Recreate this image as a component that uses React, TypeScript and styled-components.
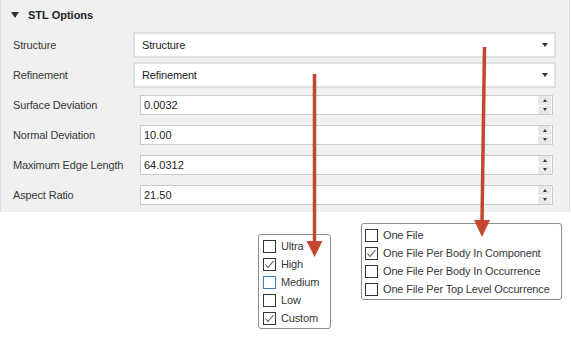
import * as React from 'react';
import styled, { createGlobalStyle } from 'styled-components';

const GlobalStyle = createGlobalStyle`
    html, body {
        margin: 0;
        padding: 0;
        background: #ffffff;
    }
    body {
        font-family: "Liberation Sans", Arial, sans-serif;
        font-size: 11px;
        color: #333333;
    }
`;

const Page = styled.div`
    position: relative;
    width: 571px;
    height: 342px;
    overflow: hidden;
`;

const Panel = styled.section`
    width: 570px;
    height: 212px;
    box-sizing: border-box;
    background: #f0f0f0;
    border-left: 1px solid #dcdcdc;
    border-right: 1px solid #e2e2e2;
    padding: 0 13px 0 12px;
`;

const Header = styled.div`
    display: flex;
    align-items: center;
    gap: 9px;
    height: 30px;
    font-weight: bold;
    font-size: 11px;
    color: #222;
`;

const Caret = styled.span`
    width: 0;
    height: 0;
    border-left: 4px solid transparent;
    border-right: 4px solid transparent;
    border-top: 6px solid #333;
    margin-left: -2px;
`;

const Form = styled.div`
    display: grid;
    grid-template-columns: 120px 1fr;
    align-items: center;
`;

const Label = styled.div<{ $h: number }>`
    height: ${({ $h }) => $h}px;
    display: flex;
    align-items: center;
    color: #383838;
    letter-spacing: -0.15px;
`;

const Cell = styled.div<{ $h: number }>`
    height: ${({ $h }) => $h}px;
    display: flex;
    align-items: center;
`;

const Select = styled.div`
    flex: 1;
    height: 26px;
    box-sizing: border-box;
    border: 2px solid #e0e0e0;
    background: #fff;
    display: flex;
    align-items: center;
    justify-content: space-between;
    padding: 0 6px 0 7px;
    color: #222;
    letter-spacing: -0.15px;
`;

const SelectArrow = styled.span`
    width: 0;
    height: 0;
    border-left: 3.5px solid transparent;
    border-right: 3.5px solid transparent;
    border-top: 4px solid #333;
`;

const Spin = styled.div`
    flex: 1;
    margin: 0 3px 0 7px;
    height: 20px;
    box-sizing: border-box;
    border: 1px solid #cacaca;
    background: #fff;
    display: flex;
    align-items: center;
    justify-content: space-between;
    padding-left: 3px;
    color: #222;
`;

const SpinButtons = styled.div`
    display: flex;
    flex-direction: column;
    align-self: stretch;
    width: 13px;
    margin-right: 1px;
    gap: 1px;
`;

const SpinButton = styled.div<{ $up?: boolean }>`
    flex: 1;
    background: #e9e9e9;
    display: flex;
    align-items: center;
    justify-content: center;

    &::after {
        content: '';
        width: 0;
        height: 0;
        border-left: 2.5px solid transparent;
        border-right: 2.5px solid transparent;
        ${({ $up }) => ($up ? 'border-bottom: 3px solid #333;' : 'border-top: 3px solid #333;')}
    }
`;

const Popups = styled.div`
    display: flex;
    align-items: flex-start;
    padding-left: 258px;
    gap: 30px;
`;

const CheckList = styled.div<{ $top: number; $w: number; $pl: number }>`
    margin-top: ${({ $top }) => $top}px;
    width: ${({ $w }) => $w}px;
    box-sizing: border-box;
    border: 1px solid #8c8c8c;
    border-radius: 3px;
    background: #fff;
    padding: 2px 0 1px ${({ $pl }) => $pl}px;
`;

const CheckRow = styled.div`
    height: 18px;
    display: flex;
    align-items: center;
    gap: 5px;
    color: #383838;
    white-space: nowrap;
    letter-spacing: -0.15px;
`;

const Box = styled.span<{ $focus?: boolean }>`
    width: 13px;
    height: 13px;
    box-sizing: border-box;
    border: 1px solid ${({ $focus }) => ($focus ? '#3a7bc4' : '#333')};
    background: #fff;
    display: flex;
    align-items: center;
    justify-content: center;
`;

const Overlay = styled.svg`
    position: absolute;
    left: 0;
    top: 0;
    pointer-events: none;
`;

const Check = () => (
    <svg width="11" height="11" viewBox="0 0 11 11">
        <polyline points="1.5,5.5 4,8.5 9.5,2" fill="none" stroke="#555" strokeWidth="1.1" />
    </svg>
);

const selects = [
    { label: 'Structure', value: 'Structure' },
    { label: 'Refinement', value: 'Refinement' },
];

const spins = [
    { label: 'Surface Deviation', value: '0.0032' },
    { label: 'Normal Deviation', value: '10.00' },
    { label: 'Maximum Edge Length', value: '64.0312' },
    { label: 'Aspect Ratio', value: '21.50' },
];

const quality = [
    { text: 'Ultra' },
    { text: 'High', checked: true },
    { text: 'Medium', focus: true },
    { text: 'Low' },
    { text: 'Custom', checked: true },
];

const files = [
    { text: 'One File' },
    { text: 'One File Per Body In Component', checked: true },
    { text: 'One File Per Body In Occurrence' },
    { text: 'One File Per Top Level Occurrence' },
];

type Item = { text: string; checked?: boolean; focus?: boolean };

const Items: React.FC<{ items: Item[] }> = ({ items }) => (
    <>
        {items.map((item) => (
            <CheckRow key={item.text}>
                <Box $focus={item.focus}>{item.checked && <Check />}</Box>
                {item.text}
            </CheckRow>
        ))}
    </>
);

export default function App() {
    return (
        <Page>
            <GlobalStyle />
            <Panel>
                <Header>
                    <Caret />
                    STL Options
                </Header>
                <Form>
                    {selects.map((s) => (
                        <React.Fragment key={s.label}>
                            <Label $h={30}>{s.label}</Label>
                            <Cell $h={30}>
                                <Select>
                                    {s.value}
                                    <SelectArrow />
                                </Select>
                            </Cell>
                        </React.Fragment>
                    ))}
                    {spins.map((s) => (
                        <React.Fragment key={s.label}>
                            <Label $h={30}>{s.label}</Label>
                            <Cell $h={30}>
                                <Spin>
                                    {s.value}
                                    <SpinButtons>
                                        <SpinButton $up />
                                        <SpinButton />
                                    </SpinButtons>
                                </Spin>
                            </Cell>
                        </React.Fragment>
                    ))}
                </Form>
            </Panel>
            <Popups>
                <CheckList $top={22} $w={73} $pl={4}>
                    <Items items={quality} />
                </CheckList>
                <CheckList $top={11} $w={201} $pl={3}>
                    <Items items={files} />
                </CheckList>
            </Popups>
            <Overlay width="571" height="342" viewBox="0 0 571 342">
                <line x1="314.5" y1="74" x2="314.5" y2="243" stroke="#c3472f" strokeWidth="3.5" />
                <polygon points="306.5,241 322.5,241 314.5,257" fill="#c3472f" />
                <line x1="484.5" y1="47" x2="482" y2="222" stroke="#c3472f" strokeWidth="3.5" />
                <polygon points="474,220 490,220 482,237" fill="#c3472f" />
            </Overlay>
        </Page>
    );
}
